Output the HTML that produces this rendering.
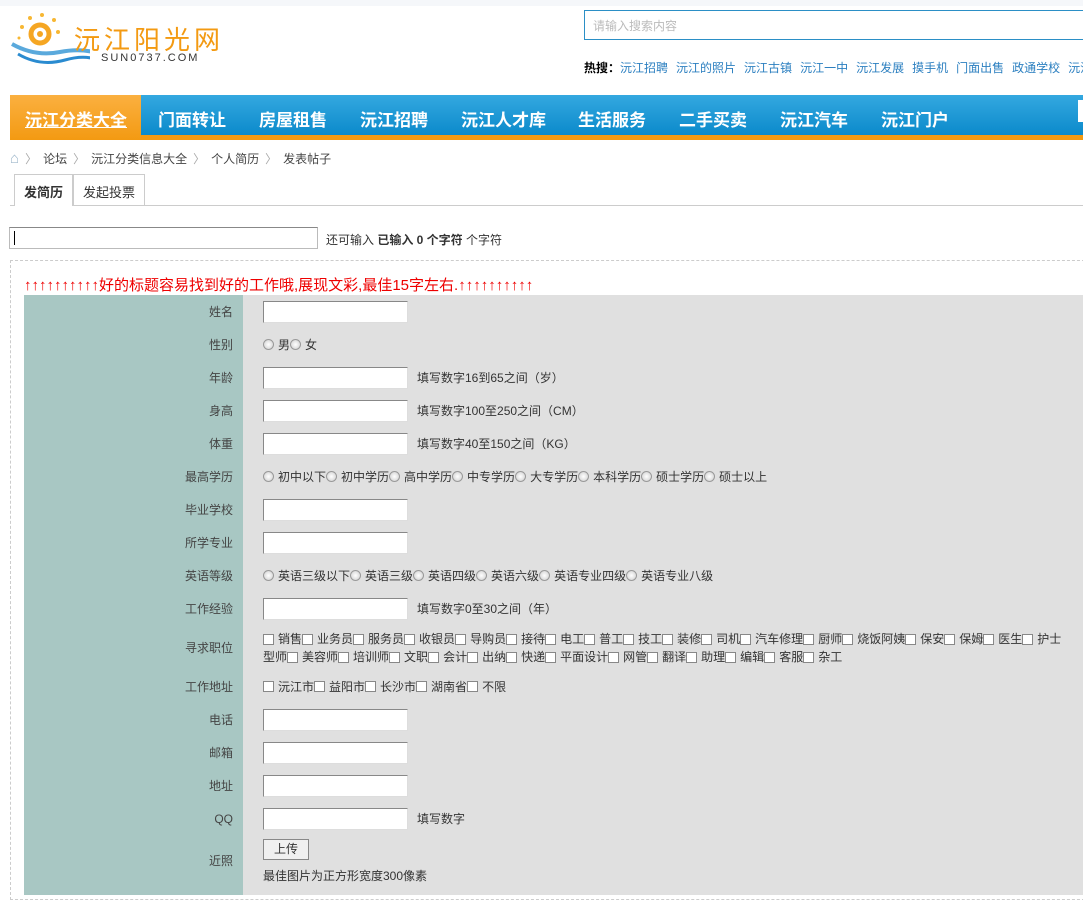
<!DOCTYPE html>
<html><head><meta charset="utf-8">
<style>
*{box-sizing:border-box;margin:0;padding:0}
body{width:1083px;height:887px;overflow:hidden;background:#fff;font-family:"Liberation Sans","Noto Sans CJK SC",sans-serif;font-size:12px;color:#333;position:relative}
.abs{position:absolute}
.topbg{left:0;top:0;width:1083px;height:6px;background:#f5f7fa}
.search{left:584px;top:10px;width:510px;height:30px;border:1px solid #2b8fc6;background:#fff;color:#bbb;padding:6px 0 0 8px;font-size:12px}
.hot{left:584px;top:59px;white-space:nowrap;font-size:12px;color:#2b7fc0}
.hot b{color:#000}
.hot span{margin-right:8px}
.nav{left:10px;top:95px;width:1073px;height:40px;background:linear-gradient(#34a8e0,#0b8acb)}
.navline{left:10px;top:135px;width:1073px;height:5px;background:#f39a12}
.cur{left:10px;top:95px;width:131px;height:45px;background:linear-gradient(#fbb040,#f39a12)}
.nv{top:106px;color:#fff;font-size:17px;font-weight:bold;white-space:nowrap}
.crumb{top:150px;left:10px;color:#444;font-size:12px;white-space:nowrap}
.crumb i{font-style:normal;color:#aaa;margin:0 6px}
.tab{top:174px;height:31px;border:1px solid #ccc;border-bottom:none;background:#fff;font-size:13px;padding-top:7px;text-align:center}
.tline{left:10px;top:205px;width:1073px;height:1px;background:#ccc}
.inp{display:inline-block;width:145px;height:22px;background:#fff;border:1px solid #ddd;border-top-color:#888;border-left-color:#888;vertical-align:middle}
.rd{display:inline-block;width:11px;height:11px;border:1px solid #999;border-radius:50%;background:radial-gradient(#fff,#ccc);vertical-align:-2px;margin-right:4px}
.cb{display:inline-block;width:11px;height:11px;border:1px solid #888;background:#fff;vertical-align:-2px;margin-right:4px}
.form{left:24px;top:295px;width:1059px}
.row{display:flex;height:33px}
.lab{width:219px;background:#a8c7c3;text-align:right;padding-right:10px;line-height:35px;color:#444}
.val{flex:1;background:#e0e0e0;padding-left:20px;display:flex;align-items:center;white-space:nowrap;color:#333}
.val .t{margin-left:9px}
</style></head><body>
<div class="abs topbg"></div>
<svg class="abs" style="left:10px;top:12px" width="80" height="60" viewBox="0 0 80 60">
<circle cx="30" cy="22" r="9" fill="none" stroke="#f5a623" stroke-width="5"/>
<circle cx="30" cy="22" r="3" fill="#f5a623"/>
<g fill="#f7b733"><circle cx="20" cy="6" r="2"/><circle cx="32" cy="3" r="2"/><circle cx="44" cy="8" r="2"/><circle cx="48" cy="20" r="2"/><circle cx="12" cy="15" r="2"/><circle cx="9" cy="26" r="1.5"/></g>
<path d="M2 32 Q25 45 50 40 T95 44" stroke="#5aa9dc" stroke-width="4" fill="none"/>
<path d="M8 42 Q30 55 55 48 T95 52" stroke="#2a8bd0" stroke-width="3" fill="none"/>
</svg>
<div class="abs" style="left:74px;top:20px;font-size:26px;color:#f39a12;letter-spacing:4px">沅江阳光网</div>
<div class="abs" style="left:101px;top:52px;font-size:11px;color:#333;letter-spacing:2px">SUN0737.COM</div>
<div class="abs search">请输入搜索内容</div>
<div class="abs hot"><b>热搜：</b><span>沅江招聘</span><span>沅江的照片</span><span>沅江古镇</span><span>沅江一中</span><span>沅江发展</span><span>摸手机</span><span>门面出售</span><span>政通学校</span><span>沅江</span></div>
<div class="abs nav"></div>
<div class="abs navline"></div>
<div class="abs cur"></div>
<div class="abs nv" style="left:25px;text-decoration:underline">沅江分类大全</div>
<div class="abs nv" style="left:158px">门面转让</div>
<div class="abs nv" style="left:259px">房屋租售</div>
<div class="abs nv" style="left:360px">沅江招聘</div>
<div class="abs nv" style="left:461px">沅江人才库</div>
<div class="abs nv" style="left:578px">生活服务</div>
<div class="abs nv" style="left:679px">二手买卖</div>
<div class="abs nv" style="left:780px">沅江汽车</div>
<div class="abs nv" style="left:881px">沅江门户</div>
<div class="abs" style="left:1078px;top:100px;width:5px;height:22px;background:#fff"></div>
<div class="abs crumb"><span style="color:#9fb8cc;font-size:15px">⌂</span><i>〉</i>论坛<i>〉</i>沅江分类信息大全<i>〉</i>个人简历<i>〉</i>发表帖子</div>
<div class="abs tab" style="left:14px;width:59px;font-weight:bold;height:32px;z-index:2">发简历</div>
<div class="abs tab" style="left:73px;width:72px">发起投票</div>
<div class="abs tline"></div>
<div class="abs" style="left:9px;top:227px;width:309px;height:22px;border:1px solid #bbb;border-top-color:#888;background:#fff"><div style="position:absolute;left:4px;top:3px;width:1px;height:14px;background:#000"></div></div>
<div class="abs" style="left:326px;top:231px;white-space:nowrap">还可输入 <b>已输入 0 个字符</b> 个字符</div>
<div class="abs" style="left:10px;top:260px;width:1090px;height:640px;border:1px dashed #ccc"></div>
<div class="abs" style="left:24px;top:274px;color:#e00;font-size:15px;white-space:nowrap">↑↑↑↑↑↑↑↑↑↑好的标题容易找到好的工作哦,展现文彩,最佳15字左右.↑↑↑↑↑↑↑↑↑↑</div>
<div class="abs form">
<div class="row"><div class="lab">姓名</div><div class="val"><span class="inp"></span></div></div>
<div class="row"><div class="lab">性别</div><div class="val"><span class="rd"></span>男<span class="rd"></span> 女</div></div>
<div class="row"><div class="lab">年龄</div><div class="val"><span class="inp"></span><span class="t">填写数字16到65之间（岁）</span></div></div>
<div class="row"><div class="lab">身高</div><div class="val"><span class="inp"></span><span class="t">填写数字100至250之间（CM）</span></div></div>
<div class="row"><div class="lab">体重</div><div class="val"><span class="inp"></span><span class="t">填写数字40至150之间（KG）</span></div></div>
<div class="row"><div class="lab">最高学历</div><div class="val"><span class="rd"></span>初中以下<span class="rd"></span>初中学历<span class="rd"></span>高中学历<span class="rd"></span>中专学历<span class="rd"></span>大专学历<span class="rd"></span>本科学历<span class="rd"></span>硕士学历<span class="rd"></span>硕士以上</div></div>
<div class="row"><div class="lab">毕业学校</div><div class="val"><span class="inp"></span></div></div>
<div class="row"><div class="lab">所学专业</div><div class="val"><span class="inp"></span></div></div>
<div class="row"><div class="lab">英语等级</div><div class="val"><span class="rd"></span>英语三级以下<span class="rd"></span>英语三级<span class="rd"></span>英语四级<span class="rd"></span>英语六级<span class="rd"></span>英语专业四级<span class="rd"></span>英语专业八级</div></div>
<div class="row"><div class="lab">工作经验</div><div class="val"><span class="inp"></span><span class="t">填写数字0至30之间（年）</span></div></div>
<div class="row" style="height:45px"><div class="lab" style="line-height:47px">寻求职位</div><div class="val" style="display:block;white-space:normal;padding-top:5px;line-height:18px;overflow:hidden"><span style="white-space:nowrap"><span class="cb"></span>销售<span class="cb"></span>业务员<span class="cb"></span>服务员<span class="cb"></span>收银员<span class="cb"></span>导购员<span class="cb"></span>接待<span class="cb"></span>电工<span class="cb"></span>普工<span class="cb"></span>技工<span class="cb"></span>装修<span class="cb"></span>司机<span class="cb"></span>汽车修理<span class="cb"></span>厨师<span class="cb"></span>烧饭阿姨<span class="cb"></span>保安<span class="cb"></span>保姆<span class="cb"></span>医生<span class="cb"></span>护士</span><br><span style="white-space:nowrap">型师<span class="cb"></span>美容师<span class="cb"></span>培训师<span class="cb"></span>文职<span class="cb"></span>会计<span class="cb"></span>出纳<span class="cb"></span>快递<span class="cb"></span>平面设计<span class="cb"></span>网管<span class="cb"></span>翻译<span class="cb"></span>助理<span class="cb"></span>编辑<span class="cb"></span>客服<span class="cb"></span>杂工</span></div></div>
<div class="row"><div class="lab">工作地址</div><div class="val"><span class="cb"></span>沅江市<span class="cb"></span>益阳市<span class="cb"></span>长沙市<span class="cb"></span>湖南省<span class="cb"></span>不限</div></div>
<div class="row"><div class="lab">电话</div><div class="val"><span class="inp"></span></div></div>
<div class="row"><div class="lab">邮箱</div><div class="val"><span class="inp"></span></div></div>
<div class="row"><div class="lab">地址</div><div class="val"><span class="inp"></span></div></div>
<div class="row"><div class="lab">QQ</div><div class="val"><span class="inp"></span><span class="t">填写数字</span></div></div>
<div class="row" style="height:60px"><div class="lab" style="line-height:52px">近照</div><div class="val" style="display:block;padding-top:4px"><div style="display:inline-block;width:46px;height:21px;border:1px solid #888;background:#f0f0f0;text-align:center;line-height:19px;font-size:12px">上传</div><div style="margin-top:7px">最佳图片为正方形宽度300像素</div></div></div>
</div>
</body></html>
